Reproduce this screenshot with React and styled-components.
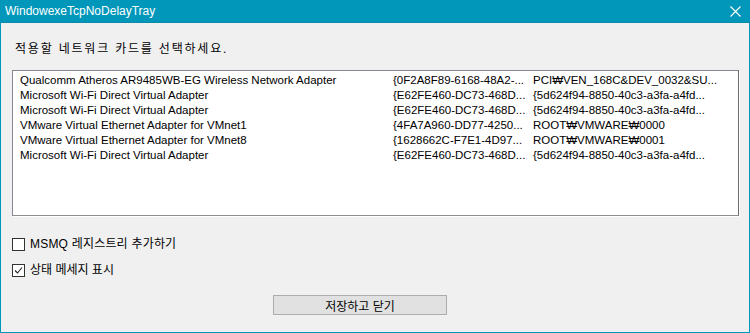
import styled, { createGlobalStyle } from 'styled-components'

const GlobalStyle = createGlobalStyle`
  html, body {
    margin: 0;
    padding: 0;
    background: #f0f0f0;
  }
  * {
    box-sizing: border-box;
  }
`

const Window = styled.div`
  width: 750px;
  height: 333px;
  display: flex;
  flex-direction: column;
  background: #f0f0f0;
  border: 1px solid #0097ba;
  border-top: none;
  font-family: "Liberation Sans", "DejaVu Sans", "Noto Sans CJK KR", sans-serif;
  font-size: 12px;
  color: #000;
`

const TitleBar = styled.div`
  height: 23px;
  margin: 0 -1px;
  padding: 0 9px 0 5px;
  display: flex;
  align-items: center;
  justify-content: space-between;
  background: #0097ba;
  color: #fff;
  font-family: "Liberation Sans", sans-serif;
  font-size: 12px;
  border-bottom: 1px solid #0a8aa8;
`

const CloseIcon = styled.svg`
  width: 11px;
  height: 11px;
`

const Body = styled.div`
  flex: 1;
  display: flex;
  flex-direction: column;
  padding: 19px 10px 0 11px;
`

const Prompt = styled.div`
  margin-left: 3px;
  line-height: 15px;
  letter-spacing: 1.8px;
`

const ListBox = styled.div`
  margin-top: 13px;
  height: 146px;
  background: #fff;
  border: 1px solid #828790;
  border-right-color: #6a6a6a;
  border-bottom-color: #8e8e8e;
  box-shadow: 1px 1px 0 #ffffff;
  padding: 2px 0 0 7px;
  font-size: 11.5px;
`

const Row = styled.div`
  display: grid;
  grid-template-columns: 373px 140px 1fr;
  height: 15px;
  line-height: 15px;
  white-space: nowrap;
`

const CheckRow = styled.label`
  display: flex;
  align-items: center;
  gap: 5px;
  height: 13px;
  margin-top: ${p => p.$gap}px;
  line-height: 13px;
`

const CheckText = styled.span`
  letter-spacing: ${p => p.$spacing || 0}px;
`

const Box = styled.span`
  width: 13px;
  height: 13px;
  border: 1px solid #333;
  background: #fff;
  display: flex;
  align-items: center;
  justify-content: center;
`

const SaveButton = styled.button`
  margin: 18px 0 0 261px;
  width: 174px;
  height: 20px;
  background: #e1e1e1;
  border: 1px solid #adadad;
  font-family: "Liberation Sans", "Noto Sans CJK KR", sans-serif;
  font-size: 12px;
  color: #000;
  padding: 0;
`

const adapters = [
  ['Qualcomm Atheros AR9485WB-EG Wireless Network Adapter', '{0F2A8F89-6168-48A2-...', 'PCI\u20A9VEN_168C&DEV_0032&SU...'],
  ['Microsoft Wi-Fi Direct Virtual Adapter', '{E62FE460-DC73-468D...', '{5d624f94-8850-40c3-a3fa-a4fd...'],
  ['Microsoft Wi-Fi Direct Virtual Adapter', '{E62FE460-DC73-468D...', '{5d624f94-8850-40c3-a3fa-a4fd...'],
  ['VMware Virtual Ethernet Adapter for VMnet1', '{4FA7A960-DD77-4250...', 'ROOT\u20A9VMWARE\u20A90000'],
  ['VMware Virtual Ethernet Adapter for VMnet8', '{1628662C-F7E1-4D97...', 'ROOT\u20A9VMWARE\u20A90001'],
  ['Microsoft Wi-Fi Direct Virtual Adapter', '{E62FE460-DC73-468D...', '{5d624f94-8850-40c3-a3fa-a4fd...'],
]

function Check({ checked }) {
  return (
    <Box>
      {checked && (
        <svg width="9" height="9" viewBox="0 0 9 9">
          <path d="M1 4.5 L3.5 7 L8 1.5" stroke="#222" strokeWidth="1.1" fill="none" />
        </svg>
      )}
    </Box>
  )
}

export default function App() {
  return (
    <>
      <GlobalStyle />
      <Window>
        <TitleBar>
          <span>WindowexeTcpNoDelayTray</span>
          <CloseIcon viewBox="0 0 11 11">
            <path d="M0.5 0.5 L10.5 10.5 M10.5 0.5 L0.5 10.5" stroke="#fff" strokeWidth="1.1" />
          </CloseIcon>
        </TitleBar>
        <Body>
          <Prompt>적용할 네트워크 카드를 선택하세요.</Prompt>
          <ListBox>
            {adapters.map((a, i) => (
              <Row key={i}>
                <span>{a[0]}</span>
                <span>{a[1]}</span>
                <span>{a[2]}</span>
              </Row>
            ))}
          </ListBox>
          <CheckRow $gap={22}>
            <Check />
            <CheckText $spacing={0.2}>MSMQ 레지스트리 추가하기</CheckText>
          </CheckRow>
          <CheckRow $gap={13}>
            <Check checked />
            <CheckText>상태 메세지 표시</CheckText>
          </CheckRow>
          <SaveButton>저장하고 닫기</SaveButton>
        </Body>
      </Window>
    </>
  )
}
